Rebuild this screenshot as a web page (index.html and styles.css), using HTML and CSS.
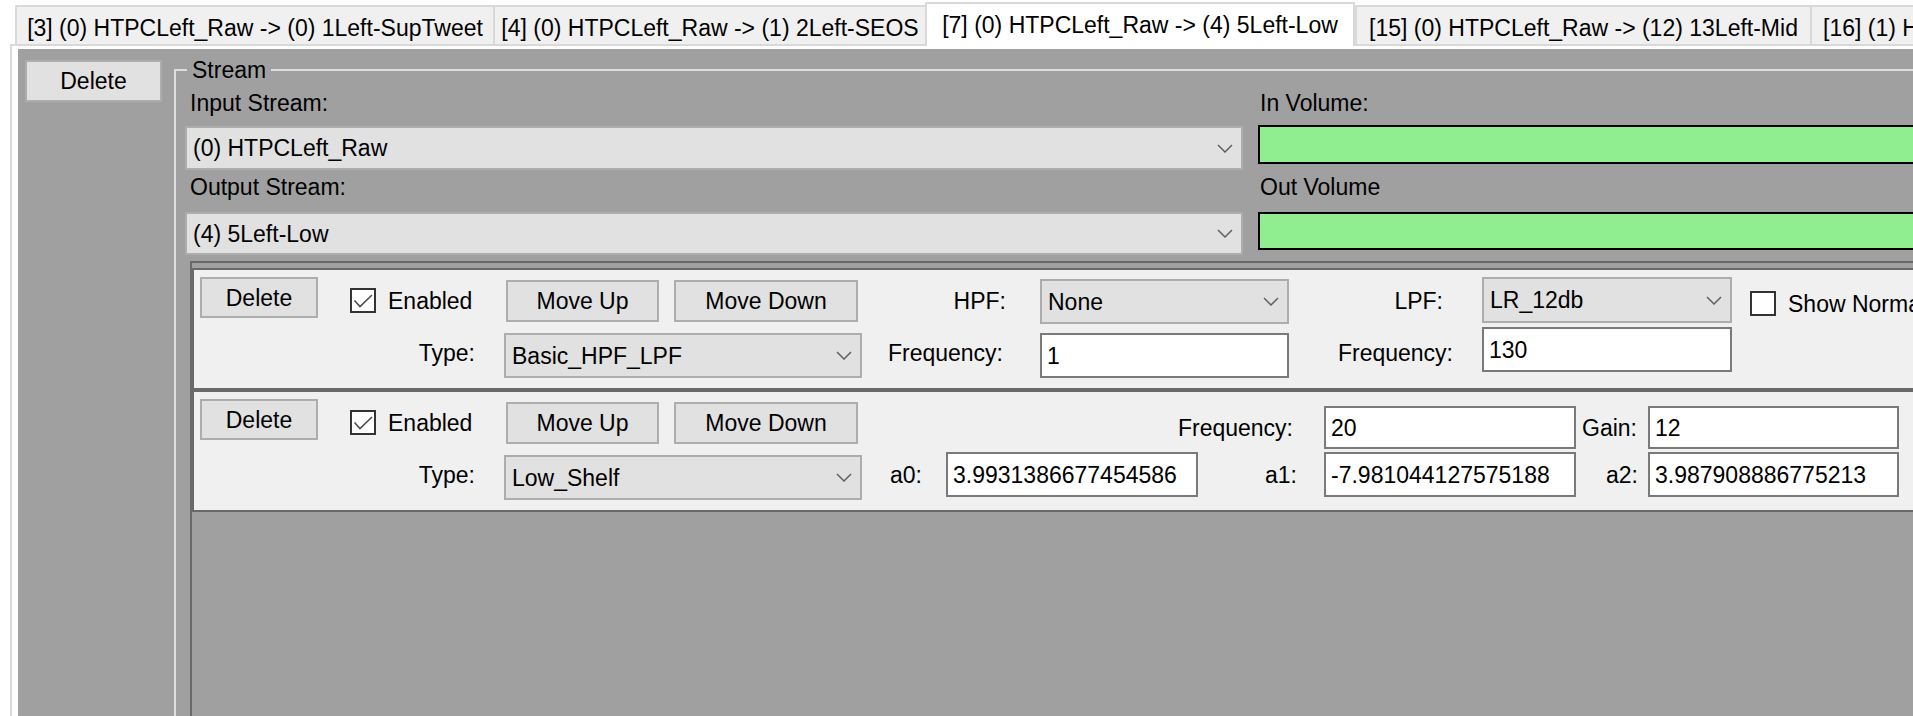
FILE: index.html
```html
<!DOCTYPE html>
<html>
<head>
<meta charset="utf-8">
<title>Stream Routing</title>
<link rel="stylesheet" href="styles.css">
</head>
<body>
<div class="tabs">
  <div class="tab tab-3">[3] (0) HTPCLeft_Raw -&gt; (0) 1Left-SupTweet</div>
  <div class="tab tab-4">[4] (0) HTPCLeft_Raw -&gt; (1) 2Left-SEOS</div>
  <div class="tab tab-7 active">[7] (0) HTPCLeft_Raw -&gt; (4) 5Left-Low</div>
  <div class="tab tab-15">[15] (0) HTPCLeft_Raw -&gt; (12) 13Left-Mid</div>
  <div class="tab tab-16">[16] (1) HTPCRight_Raw</div>
</div>
<div class="page">
  <div class="content">
    <button class="btn del-main">Delete</button>
    <fieldset class="group">
      <legend>Stream</legend>
      <div class="stream-top">
        <div class="io-col">
          <div class="lbl">Input Stream:</div>
          <div class="combo io-in"><span>(0) HTPCLeft_Raw</span><svg class="chev" width="16" height="9" viewBox="0 0 16 9"><polyline points="1,1 8,8 15,1" fill="none" stroke="#606060" stroke-width="1.5"/></svg></div>
          <div class="lbl lbl-2">Output Stream:</div>
          <div class="combo io-out"><span>(4) 5Left-Low</span><svg class="chev" width="16" height="9" viewBox="0 0 16 9"><polyline points="1,1 8,8 15,1" fill="none" stroke="#606060" stroke-width="1.5"/></svg></div>
        </div>
        <div class="vol-col">
          <div class="lbl">In Volume:</div>
          <div class="vol vol-in"></div>
          <div class="lbl lbl-2v">Out Volume</div>
          <div class="vol vol-out"></div>
        </div>
      </div>

      <div class="filters">
        <div class="filter">
          <div class="f-left">
            <div class="line">
              <button class="btn del">Delete</button>
              <div class="chk"><span class="box"><svg width="22" height="21" viewBox="0 0 22 21"><polyline points="2.5,10.5 8,16.5 20,5" fill="none" stroke="#4d4d4d" stroke-width="1.6"/></svg></span><span class="chk-text">Enabled</span></div>
              <button class="btn mv-up">Move Up</button>
              <button class="btn mv-down">Move Down</button>
            </div>
            <div class="line">
              <div class="type-lbl">Type:</div>
              <div class="combo type-combo"><span>Basic_HPF_LPF</span><svg class="chev" width="16" height="9" viewBox="0 0 16 9"><polyline points="1,1 8,8 15,1" fill="none" stroke="#606060" stroke-width="1.5"/></svg></div>
            </div>
          </div>
          <div class="f-right r1">
            <div class="g-lbl pr-34">HPF:</div>
            <div class="combo c-end"><span>None</span><svg class="chev" width="16" height="9" viewBox="0 0 16 9"><polyline points="1,1 8,8 15,1" fill="none" stroke="#606060" stroke-width="1.5"/></svg></div>
            <div class="g-lbl pr-39">LPF:</div>
            <div class="combo c-start"><span>LR_12db</span><svg class="chev" width="16" height="9" viewBox="0 0 16 9"><polyline points="1,1 8,8 15,1" fill="none" stroke="#606060" stroke-width="1.5"/></svg></div>
            <div class="chk norm"><span class="box"></span><span class="chk-text">Show Normalized</span></div>
            <div class="g-lbl pr-37">Frequency:</div>
            <div class="txt t-end">1</div>
            <div class="g-lbl pr-29">Frequency:</div>
            <div class="txt t-start">130</div>
          </div>
        </div>

        <div class="filter">
          <div class="f-left">
            <div class="line">
              <button class="btn del">Delete</button>
              <div class="chk"><span class="box"><svg width="22" height="21" viewBox="0 0 22 21"><polyline points="2.5,10.5 8,16.5 20,5" fill="none" stroke="#4d4d4d" stroke-width="1.6"/></svg></span><span class="chk-text">Enabled</span></div>
              <button class="btn mv-up">Move Up</button>
              <button class="btn mv-down">Move Down</button>
            </div>
            <div class="line">
              <div class="type-lbl">Type:</div>
              <div class="combo type-combo"><span>Low_Shelf</span><svg class="chev" width="16" height="9" viewBox="0 0 16 9"><polyline points="1,1 8,8 15,1" fill="none" stroke="#606060" stroke-width="1.5"/></svg></div>
            </div>
          </div>
          <div class="f-right r2">
            <div class="g-lbl pr-31 col-3">Frequency:</div>
            <div class="txt">20</div>
            <div class="g-lbl pr-11">Gain:</div>
            <div class="txt">12</div>
            <div class="g-lbl pr-24">a0:</div>
            <div class="txt">3.9931386677454586</div>
            <div class="g-lbl pr-27">a1:</div>
            <div class="txt">-7.981044127575188</div>
            <div class="g-lbl pr-10">a2:</div>
            <div class="txt">3.987908886775213</div>
          </div>
        </div>
      </div>
    </fieldset>
  </div>
</div>
</body>
</html>
```
FILE: styles.css
```css
* { box-sizing: border-box; }
html, body { margin: 0; padding: 0; overflow: hidden; }
body {
  width: 1913px;
  height: 716px;
  background: #ffffff;
  font-family: "Liberation Sans", Arial, sans-serif;
  font-size: 23px;
  line-height: 26px;
  color: #000;
}

/* tab strip */
.tabs {
  display: flex;
  align-items: flex-end;
  height: 44px;
  padding-left: 15px;
  position: relative;
  z-index: 2;
}
.tab {
  flex: 0 0 auto;
  height: 39px;
  padding-top: 5px;
  display: flex;
  align-items: center;
  justify-content: center;
  background: #f0f0f0;
  border: 2px solid #d9d9d9;
  border-bottom: 0;
  border-right: 0;
  white-space: nowrap;
}
.tab-3 { width: 478px; }
.tab-4 { width: 432px; }
.tab-7 { width: 430px; }
.tab-15 { width: 455px; }
.tab-16 { width: 300px; justify-content: flex-start; padding-left: 11px; }
.tab.active {
  height: 44px;
  padding-top: 0;
  margin-bottom: -2px;
  background: #fff;
  border-right: 2px solid #d9d9d9;
}

/* tab page */
.page {
  margin-left: 10px;
  height: 672px;
  border-left: 2px solid #d9d9d9;
  border-top: 2px solid #d9d9d9;
  padding: 3px 0 0 6px;
  background: #fff;
}
.content {
  height: 100%;
  background: #a0a0a0;
  display: flex;
  align-items: flex-start;
  padding: 11px 0 0 7px;
}

.btn {
  font: inherit;
  color: #000;
  background: #e1e1e1;
  border: 2px solid #adadad;
  padding: 0;
  margin: 0;
  display: flex;
  align-items: center;
  justify-content: center;
  flex: 0 0 auto;
}
.del-main { width: 137px; height: 42px; }

/* group box */
.group {
  flex: 0 0 auto;
  width: 1800px;
  height: 700px;
  margin: -3px 0 0 12px;
  padding: 7px 0 0 0;
  border: 2px solid #dedede;
  min-width: 0;
}
.group legend {
  margin-left: 11px;
  padding: 0 5px;
  height: 26px;
  line-height: 26px;
}

.stream-top { display: flex; margin-left: 9px; }
.io-col { flex: 0 0 1058px; display: flex; flex-direction: column; }
.vol-col { flex: 0 0 700px; margin-left: 15px; display: flex; flex-direction: column; }
.lbl { height: 26px; line-height: 26px; white-space: nowrap; }
.io-col .lbl { padding-left: 5px; }
.vol-col .lbl { padding-left: 2px; }
.lbl-2 { margin-top: 4px; }
.lbl-2v { margin-top: 10px; }

.combo {
  display: flex;
  align-items: center;
  justify-content: space-between;
  background: #e1e1e1;
  border: 2px solid #adadad;
  padding: 0 8px 0 6px;
  white-space: nowrap;
}
.chev { flex: 0 0 auto; }
.io-in { height: 44px; margin-top: 10px; }
.io-out { height: 43px; margin-top: 12px; }

.vol { background: #90ee90; border: 2px solid #000; }
.vol-in { height: 39px; margin-top: 9px; }
.vol-out { height: 38px; margin-top: 12px; }

/* filter list */
.filters {
  margin: 6px 0 0 14px;
  width: 1780px;
  height: 500px;
  border-left: 2px solid #696969;
  border-top: 2px solid #696969;
  padding-top: 5px;
}
.filter {
  display: flex;
  height: 122px;
  border: 2px solid #696969;
  background: #f0f0f0;
}
.f-left {
  flex: 0 0 668px;
  padding: 7px 0 0 6px;
  display: grid;
  grid-template-rows: 47px 51px;
  row-gap: 3px;
}
.line { display: flex; align-items: center; }
.del { width: 118px; height: 41px; align-self: flex-start; }
.chk { display: flex; align-items: center; margin-left: 32px; width: 156px; white-space: nowrap; }
.box {
  width: 26px;
  height: 25px;
  border: 2px solid #333;
  background: #fff;
  flex: 0 0 auto;
  display: block;
}
.box svg { display: block; }
.chk-text { margin-left: 12px; }
.mv-up { width: 153px; height: 42px; }
.mv-down { width: 184px; height: 42px; margin-left: 15px; }
.type-lbl { width: 304px; text-align: right; padding-right: 29px; }
.type-combo { width: 358px; height: 45px; align-self: flex-end; }

.f-right { display: grid; padding-top: 7px; row-gap: 3px; }
.r1 {
  grid-template-columns: 178px 249px 193px 250px 300px;
  grid-template-rows: 47px 51px;
}
.r2 {
  grid-template-columns: 84px 252px 126px 252px 72px 251px;
  grid-template-rows: 43px 45px;
  padding-top: 14px;
}
.g-lbl { display: flex; align-items: center; justify-content: flex-end; white-space: nowrap; }
.col-3 { grid-column: 3; }
.pr-10 { padding-right: 10px; }
.pr-11 { padding-right: 11px; }
.pr-24 { padding-right: 24px; }
.pr-27 { padding-right: 27px; }
.pr-29 { padding-right: 29px; }
.pr-31 { padding-right: 31px; }
.pr-34 { padding-right: 34px; }
.pr-37 { padding-right: 37px; }
.pr-39 { padding-right: 39px; }

.c-end { height: 45px; align-self: end; }
.c-start { height: 46px; align-self: start; }
.norm { margin: 6px 0 0 18px; width: auto; align-self: center; }

.txt {
  background: #fff;
  border: 2px solid #7a7a7a;
  padding-left: 5px;
  display: flex;
  align-items: center;
  white-space: nowrap;
  overflow: hidden;
}
.t-end { height: 45px; align-self: end; }
.t-start { height: 45px; align-self: start; }
```
